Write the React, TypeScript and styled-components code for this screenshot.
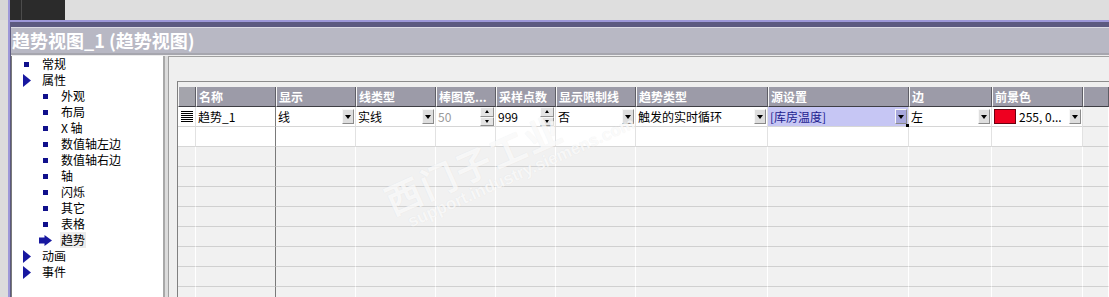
import React from "react";
import styled, { createGlobalStyle, css } from "styled-components";

const Global = createGlobalStyle`
  html, body { margin: 0; padding: 0; background: #dcdcdc; }
  body { font-family: "Noto Sans CJK SC", "Liberation Sans", sans-serif; font-size: 12px; }
  * { box-sizing: border-box; }
`;

const Screen = styled.div`
  width: 1109px;
  height: 297px;
  overflow: hidden;
  background: #dcdcdc;
  display: flex;
  flex-direction: column;
`;

const TopStrip = styled.div`
  height: 20px;
  flex: none;
  display: flex;
  background: #dedede;
`;

const TopGutter = styled.div`
  width: 10px;
  background: #d6d6d6;
  border-right: 2px solid #9d98d8;
`;

const DarkTab = styled.div`
  width: 55px;
  background: linear-gradient(to right, #2b2b2b 11px, #4c4c4c 11px, #4c4c4c 12px, #2b2b2b 12px);
`;

const Window = styled.div`
  flex: 1;
  min-height: 0;
  display: flex;
  flex-direction: column;
  margin-left: 8px;
  border-left: 2px solid #9d98d8;
  border-top: 2px solid #9d98d8;
`;

const Frame = styled.div`
  flex: 1;
  min-height: 0;
  display: flex;
  flex-direction: column;
  border-top: 5px solid #5c5a80;
  border-left: 1px solid #5c5a80;
`;

const TitleBar = styled.div`
  height: 28px;
  flex: none;
  background: #b8b8c4;
  border-top: 1px solid #dcdce4;
  border-bottom: 2px solid #a6a6ae;
  color: #ffffff;
  font-weight: 700;
  font-size: 18px;
  line-height: 25px;
  padding-left: 1px;
  white-space: nowrap;
`;

const Body = styled.div`
  flex: 1;
  min-height: 0;
  display: flex;
  gap: 3px;
  border-top: 1px solid #ececec;
  background: #dcdcdc;
`;

const TreePanel = styled.div`
  width: 154px;
  flex: none;
  background: #ffffff;
  border-left: 1px solid #7a7a7a;
  border-right: 2px solid #a8a8a8;
  display: flex;
  flex-direction: column;
`;

const TreeItem = styled.div<{ $level: number }>`
  height: 16px;
  display: flex;
  align-items: center;
  gap: 8px;
  padding-left: ${(p) => (p.$level === 0 ? 8 : 27)}px;
  color: #000;
  font-size: 12px;
  line-height: 16px;
  white-space: nowrap;
`;

const IconBox = styled.span`
  width: 13px;
  height: 16px;
  display: flex;
  align-items: center;
  justify-content: center;
  flex: none;
`;

const Bullet = styled.span`
  width: 5px;
  height: 5px;
  background: #10108c;
`;

const TreeLabel = styled.span<{ $active?: boolean }>`
  padding: 0 1px;
  ${(p) =>
    p.$active &&
    css`
      background: #ececec;
    `}
`;

const GridPanel = styled.div`
  flex: 1;
  position: relative;
  background: #efefef;
  border-left: 1px solid #a0a0a0;
  border-top: 1px solid #a0a0a0;
  padding: 24px 0 0 8px;
  overflow: hidden;
`;

const Table = styled.div`
  border-top: 1px solid #8c8c8c;
  border-left: 1px solid #808080;
  padding-top: 5px;
  display: flex;
  flex-direction: column;
`;

const Row = styled.div`
  display: grid;
  grid-template-columns: 18px 80px 80px 80px 60px 60px 80px 132px 141px 83px 91px 1fr;
  height: 20px;
`;

const HeadCell = styled.div<{ $corner?: boolean }>`
  height: 20px;
  background: ${(p) => (p.$corner ? "#a4a4ac" : "#9c9ba8")};
  border-left: 1px solid #f6f6f6;
  border-right: 1px solid #5e5e66;
  border-bottom: 1px solid #3e3e44;
  color: #ffffff;
  font-weight: 700;
  font-size: 12px;
  line-height: 19px;
  padding-left: 2px;
  white-space: nowrap;
  overflow: hidden;
`;

type Tone = "white" | "gray";

const Cell = styled.div<{ $tone: Tone; $strong?: boolean; $selected?: boolean; $center?: boolean }>`
  position: relative;
  height: 20px;
  display: flex;
  align-items: center;
  justify-content: ${(p) => (p.$center ? "center" : "flex-start")};
  gap: 3px;
  padding: ${(p) => (p.$center ? "0" : "0 1px 0 2px")};
  font-size: 12px;
  color: #000;
  white-space: nowrap;
  background: ${(p) => (p.$selected ? "#c6c6f4" : p.$tone === "white" ? "#ffffff" : "#f1f1f1")};
  border-bottom: 1px solid ${(p) => (p.$tone === "white" ? "#d6d6d6" : "#d0d0d0")};
  border-right: 1px solid
    ${(p) => (p.$strong ? "#7a7a7a" : p.$tone === "white" ? "#e2e2e2" : "#ffffff")};
`;

const CellText = styled.span<{ $muted?: boolean; $link?: boolean }>`
  flex: 1;
  min-width: 0;
  color: ${(p) => (p.$muted ? "#9a9a9a" : p.$link ? "#1c1c90" : "#000")};
  line-height: 19px;
`;

const DropButton = styled.span<{ $selected?: boolean }>`
  width: 12px;
  height: 15px;
  flex: none;
  display: flex;
  align-items: center;
  justify-content: center;
  background: ${(p) => (p.$selected ? "#a8a8dc" : "#dedede")};
  border-top: 1px solid #f8f8f8;
  border-left: 1px solid #f8f8f8;
  border-right: 1px solid #8a8a8a;
  border-bottom: 1px solid #8a8a8a;
  &::after {
    content: "";
    border-left: 3.5px solid transparent;
    border-right: 3.5px solid transparent;
    border-top: 4px solid #000;
  }
`;

const Spinner = styled.span`
  width: 14px;
  height: 19px;
  flex: none;
  display: flex;
  flex-direction: column;
`;

const SpinHalf = styled.span<{ $down?: boolean }>`
  flex: 1;
  display: flex;
  align-items: center;
  justify-content: center;
  background: #e4e4e4;
  border-top: 1px solid #fafafa;
  border-left: 1px solid #fafafa;
  border-right: 1px solid #909090;
  border-bottom: 1px solid #909090;
  &::after {
    content: "";
    border-left: 2.5px solid transparent;
    border-right: 2.5px solid transparent;
    ${(p) =>
      p.$down
        ? css`
            border-top: 3px solid #000;
          `
        : css`
            border-bottom: 3px solid #000;
          `}
  }
`;

const Swatch = styled.span`
  width: 22px;
  height: 15px;
  flex: none;
  background: #ee0020;
  border: 1px solid #6a0010;
`;

const Handle = styled.span`
  position: absolute;
  right: -2px;
  bottom: -2px;
  width: 4px;
  height: 4px;
  background: #000;
`;

const Watermark = styled.div`
  position: absolute;
  left: 210px;
  top: 128px;
  transform: rotate(-24deg);
  transform-origin: left top;
  pointer-events: none;
  display: flex;
  flex-direction: column;
  color: rgba(255, 255, 255, 0.75);
  text-shadow: 0 0 1px rgba(0, 0, 0, 0.08);
  line-height: 1;
`;

const WatermarkBig = styled.span`
  font-size: 36px;
  font-weight: 700;
  letter-spacing: 2px;
`;

const WatermarkSmall = styled.span`
  font-family: "Liberation Sans", sans-serif;
  font-size: 17px;
  font-weight: 700;
  margin-top: 2px;
  margin-left: 12px;
`;

const TriangleIcon = () => (
  <svg width="8" height="13" viewBox="0 0 8 13">
    <polygon points="0,0 8,6.5 0,13" fill="#1818a0" />
  </svg>
);

const ArrowIcon = () => (
  <svg width="13" height="11" viewBox="0 0 13 11">
    <polygon points="0,2.5 5.5,2.5 5.5,0 13,5.5 5.5,11 5.5,8.5 0,8.5" fill="#1818a0" />
  </svg>
);

const RowIcon = () => (
  <svg width="12" height="11" viewBox="0 0 12 11">
    {[0, 2, 4, 6, 8, 10].map((y) => (
      <rect key={y} x="0" y={y} width="12" height="1" fill="#000" />
    ))}
  </svg>
);

type TreeDef = { level: number; icon: "square" | "triangle" | "arrow"; label: string; active?: boolean };

const tree: TreeDef[] = [
  { level: 0, icon: "square", label: "常规" },
  { level: 0, icon: "triangle", label: "属性" },
  { level: 1, icon: "square", label: "外观" },
  { level: 1, icon: "square", label: "布局" },
  { level: 1, icon: "square", label: "X 轴" },
  { level: 1, icon: "square", label: "数值轴左边" },
  { level: 1, icon: "square", label: "数值轴右边" },
  { level: 1, icon: "square", label: "轴" },
  { level: 1, icon: "square", label: "闪烁" },
  { level: 1, icon: "square", label: "其它" },
  { level: 1, icon: "square", label: "表格" },
  { level: 1, icon: "arrow", label: "趋势", active: true },
  { level: 0, icon: "triangle", label: "动画" },
  { level: 0, icon: "triangle", label: "事件" },
];

const headers = ["名称", "显示", "线类型", "棒图宽...", "采样点数", "显示限制线", "趋势类型", "源设置", "边", "前景色", ""];

const EmptyRow: React.FC<{ tone: Tone }> = ({ tone }) => (
  <Row>
    <Cell $tone={tone} />
    <Cell $tone={tone} $strong />
    {Array.from({ length: 9 }).map((_, i) => (
      <Cell key={i} $tone={tone} />
    ))}
    <Cell $tone="gray" />
  </Row>
);

const Combo: React.FC<{ text: string; selected?: boolean; link?: boolean }> = ({ text, selected, link }) => (
  <Cell $tone="white" $selected={selected}>
    <CellText $link={link}>{text}</CellText>
    <DropButton $selected={selected} />
    {selected && <Handle />}
  </Cell>
);

const Spin: React.FC<{ text: string; muted?: boolean }> = ({ text, muted }) => (
  <Cell $tone="white">
    <CellText $muted={muted}>{text}</CellText>
    <Spinner>
      <SpinHalf />
      <SpinHalf $down />
    </Spinner>
  </Cell>
);

export default function App() {
  return (
    <>
      <Global />
      <Screen>
        <TopStrip>
          <TopGutter />
          <DarkTab />
        </TopStrip>
        <Window>
          <Frame>
            <TitleBar>趋势视图_1 (趋势视图)</TitleBar>
            <Body>
              <TreePanel>
                {tree.map((t) => (
                  <TreeItem key={t.label} $level={t.level}>
                    <IconBox>
                      {t.icon === "square" && <Bullet />}
                      {t.icon === "triangle" && <TriangleIcon />}
                      {t.icon === "arrow" && <ArrowIcon />}
                    </IconBox>
                    <TreeLabel $active={t.active}>{t.label}</TreeLabel>
                  </TreeItem>
                ))}
              </TreePanel>
              <GridPanel>
                <Table>
                  <Row>
                    <HeadCell $corner />
                    {headers.map((h, i) => (
                      <HeadCell key={i}>{h}</HeadCell>
                    ))}
                  </Row>
                  <Row>
                    <Cell $tone="white" $center>
                      <RowIcon />
                    </Cell>
                    <Cell $tone="white" $strong>
                      <CellText>趋势_1</CellText>
                    </Cell>
                    <Combo text="线" />
                    <Combo text="实线" />
                    <Spin text="50" muted />
                    <Spin text="999" />
                    <Combo text="否" />
                    <Combo text="触发的实时循环" />
                    <Combo text="[库房温度]" selected link />
                    <Combo text="左" />
                    <Cell $tone="white">
                      <Swatch />
                      <CellText>255, 0...</CellText>
                      <DropButton />
                    </Cell>
                    <Cell $tone="gray" />
                  </Row>
                  <EmptyRow tone="white" />
                  {Array.from({ length: 8 }).map((_, i) => (
                    <EmptyRow key={i} tone="gray" />
                  ))}
                </Table>
                <Watermark>
                  <WatermarkBig>西门子工业</WatermarkBig>
                  <WatermarkSmall>support.industry.siemens.com</WatermarkSmall>
                </Watermark>
              </GridPanel>
            </Body>
          </Frame>
        </Window>
      </Screen>
    </>
  );
}
